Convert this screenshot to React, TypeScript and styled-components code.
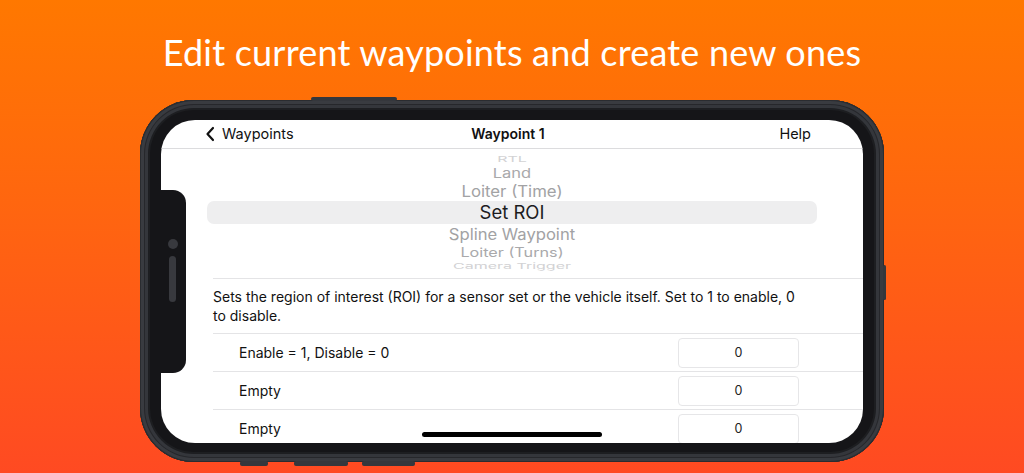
import styled, { createGlobalStyle } from "styled-components";

const GlobalStyle = createGlobalStyle`
  html, body {
    margin: 0;
    padding: 0;
    overflow: hidden;
  }
  body {
    font-family: Inter, "Liberation Sans", sans-serif;
  }
`;

const Page = styled.div`
  width: 1024px;
  height: 473px;
  display: flex;
  flex-direction: column;
  align-items: center;
  background: linear-gradient(180deg, #ff7800 0%, #ff6510 45%, #ff4a22 100%);
  overflow: hidden;
`;

const Headline = styled.h1`
  margin: 0;
  height: 100px;
  padding-top: 3px;
  box-sizing: border-box;
  display: flex;
  align-items: center;
  justify-content: center;
  font-family: Lato, "Open Sans", sans-serif;
  font-weight: 400;
  font-size: 36px;
  color: #ffffff;
  letter-spacing: 0.2px;
`;

const Phone = styled.div`
  position: relative;
  width: 744px;
  height: 362px;
  box-sizing: border-box;
  padding: 20px 21px 19px 21px;
  border-radius: 54px;
  background: #151518;
  box-shadow:
    inset 0 0 0 1px #2a2c30,
    inset 0 0 0 4px #393b40,
    inset 0 0 0 5px #26272b,
    inset 0 0 0 8px #34363b,
    inset 0 0 0 10px #1d1e21;
`;

const SideButton = styled.span<{ $top?: number; $left?: number; $w: number; $h: number; $bottom?: number; $right?: number }>`
  position: absolute;
  width: ${(p) => p.$w}px;
  height: ${(p) => p.$h}px;
  background: #35373c;
  border-radius: 2px;
  ${(p) => (p.$top !== undefined ? `top: ${p.$top}px;` : "")}
  ${(p) => (p.$left !== undefined ? `left: ${p.$left}px;` : "")}
  ${(p) => (p.$bottom !== undefined ? `bottom: ${p.$bottom}px;` : "")}
  ${(p) => (p.$right !== undefined ? `right: ${p.$right}px;` : "")}
`;

const Screen = styled.div`
  position: relative;
  height: 100%;
  border-radius: 34px;
  background: #ffffff;
  overflow: hidden;
  display: flex;
  flex-direction: column;
`;

const Notch = styled.div`
  position: absolute;
  left: 0;
  top: 70px;
  width: 25px;
  height: 183px;
  background: #151518;
  border-radius: 0 13px 13px 0;
  display: flex;
  flex-direction: column;
  align-items: center;
  padding-top: 49px;
  box-sizing: border-box;
  gap: 7px;
  padding-right: 2px;
`;

const NotchDot = styled.span`
  width: 10px;
  height: 10px;
  border-radius: 50%;
  background: #38393e;
`;

const NotchPill = styled.span`
  width: 7px;
  height: 46px;
  border-radius: 4px;
  background: #38393e;
`;

const NavBar = styled.div`
  height: 27px;
  flex-shrink: 0;
  display: grid;
  grid-template-columns: 1fr auto 1fr;
  align-items: center;
  padding: 0 52px 1px 44px;
  border-bottom: 1px solid #dcdcde;
  font-size: 14.5px;
  color: #111111;
`;

const BackLink = styled.div`
  display: flex;
  align-items: center;
  gap: 7px;
  svg {
    display: block;
  }
`;

const NavTitle = styled.div`
  font-weight: 600;
  font-size: 14px;
`;

const NavAction = styled.div`
  justify-self: end;
`;

const Picker = styled.div`
  height: 129px;
  flex-shrink: 0;
  display: flex;
  flex-direction: column;
  padding-top: 4px;
  box-sizing: border-box;
`;

const PickerItem = styled.div<{ $h: number; $size: number; $color: string; $scale: number; $selected?: boolean }>`
  height: ${(p) => p.$h}px;
  flex-shrink: 0;
  margin: 0 ${(p) => (p.$selected ? 46 : 0)}px;
  border-radius: ${(p) => (p.$selected ? 7 : 0)}px;
  background: ${(p) => (p.$selected ? "#eeeeef" : "transparent")};
  display: flex;
  justify-content: center;
  align-items: center;
  font-size: ${(p) => p.$size}px;
  color: ${(p) => p.$color};

  span {
    display: block;
    line-height: 1;
    transform: scaleY(${(p) => p.$scale});
  }
`;

const Divider = styled.div`
  height: 1px;
  margin-left: 52px;
  background: #e4e4e6;
  flex-shrink: 0;
`;

const Description = styled.p`
  margin: 0;
  padding: 8px 62px 8px 52px;
  font-size: 14px;
  line-height: 19px;
  color: #111111;
`;

const FieldRow = styled.div`
  height: 37px;
  flex-shrink: 0;
  display: flex;
  align-items: center;
  justify-content: space-between;
  padding: 0 64px 0 78px;
  font-size: 14px;
  color: #111111;
`;

const ValueBox = styled.div`
  width: 121px;
  height: 30px;
  box-sizing: border-box;
  border: 1px solid #e6e6e8;
  border-radius: 4px;
  display: flex;
  align-items: center;
  justify-content: center;
  font-size: 12.5px;
  color: #222222;
`;

const HomeIndicator = styled.div`
  position: absolute;
  left: 50%;
  bottom: 6px;
  width: 180px;
  height: 5px;
  margin-left: -90px;
  border-radius: 3px;
  background: #000000;
`;

const pickerItems = [
  { label: "RTL", h: 12, size: 16, color: "#d2d2d4", scale: 0.5 },
  { label: "Land", h: 16, size: 16.5, color: "#a9a9ab", scale: 0.78 },
  { label: "Loiter (Time)", h: 20, size: 16.8, color: "#a2a2a4", scale: 0.92 },
  { label: "Set ROI", h: 23, size: 18.5, color: "#1c1c1e", scale: 1, selected: true },
  { label: "Spline Waypoint", h: 20, size: 16.6, color: "#a2a2a4", scale: 0.92 },
  { label: "Loiter (Turns)", h: 16, size: 16.2, color: "#a9a9ab", scale: 0.78 },
  { label: "Camera Trigger", h: 12, size: 16, color: "#d2d2d4", scale: 0.5 },
];

const fields = [
  { label: "Enable = 1, Disable = 0", value: "0" },
  { label: "Empty", value: "0" },
  { label: "Empty", value: "0" },
];

export default function App() {
  return (
    <>
      <GlobalStyle />
      <Page>
        <Headline>Edit current waypoints and create new ones</Headline>
        <Phone>
          <SideButton $top={-3} $left={171} $w={86} $h={4} />
          <SideButton $top={165} $right={-2} $w={3} $h={35} />
          <SideButton $bottom={-4} $left={100} $w={28} $h={5} />
          <SideButton $bottom={-4} $left={154} $w={54} $h={5} />
          <SideButton $bottom={-4} $left={222} $w={53} $h={5} />
          <Screen>
            <NavBar>
              <BackLink>
                <svg width="10" height="16" viewBox="0 0 10 16">
                  <path d="M8 2 L2.5 8 L8 14" fill="none" stroke="#111" strokeWidth="2.2" strokeLinecap="round" strokeLinejoin="round" />
                </svg>
                <span>Waypoints</span>
              </BackLink>
              <NavTitle>Waypoint 1</NavTitle>
              <NavAction>Help</NavAction>
            </NavBar>
            <Picker>
              {pickerItems.map((it) => (
                <PickerItem
                  key={it.label}
                  $h={it.h}
                  $size={it.size}
                  $color={it.color}
                  $scale={it.scale}
                  $selected={it.selected}
                >
                  <span>{it.label}</span>
                </PickerItem>
              ))}
            </Picker>
            <Divider />
            <Description>
              Sets the region of interest (ROI) for a sensor set or the vehicle itself. Set to 1 to enable, 0 to disable.
            </Description>
            {fields.map((f, i) => (
              <div key={i}>
                <Divider />
                <FieldRow>
                  <span>{f.label}</span>
                  <ValueBox>{f.value}</ValueBox>
                </FieldRow>
              </div>
            ))}
            <Notch>
              <NotchDot />
              <NotchPill />
            </Notch>
            <HomeIndicator />
          </Screen>
        </Phone>
      </Page>
    </>
  );
}
